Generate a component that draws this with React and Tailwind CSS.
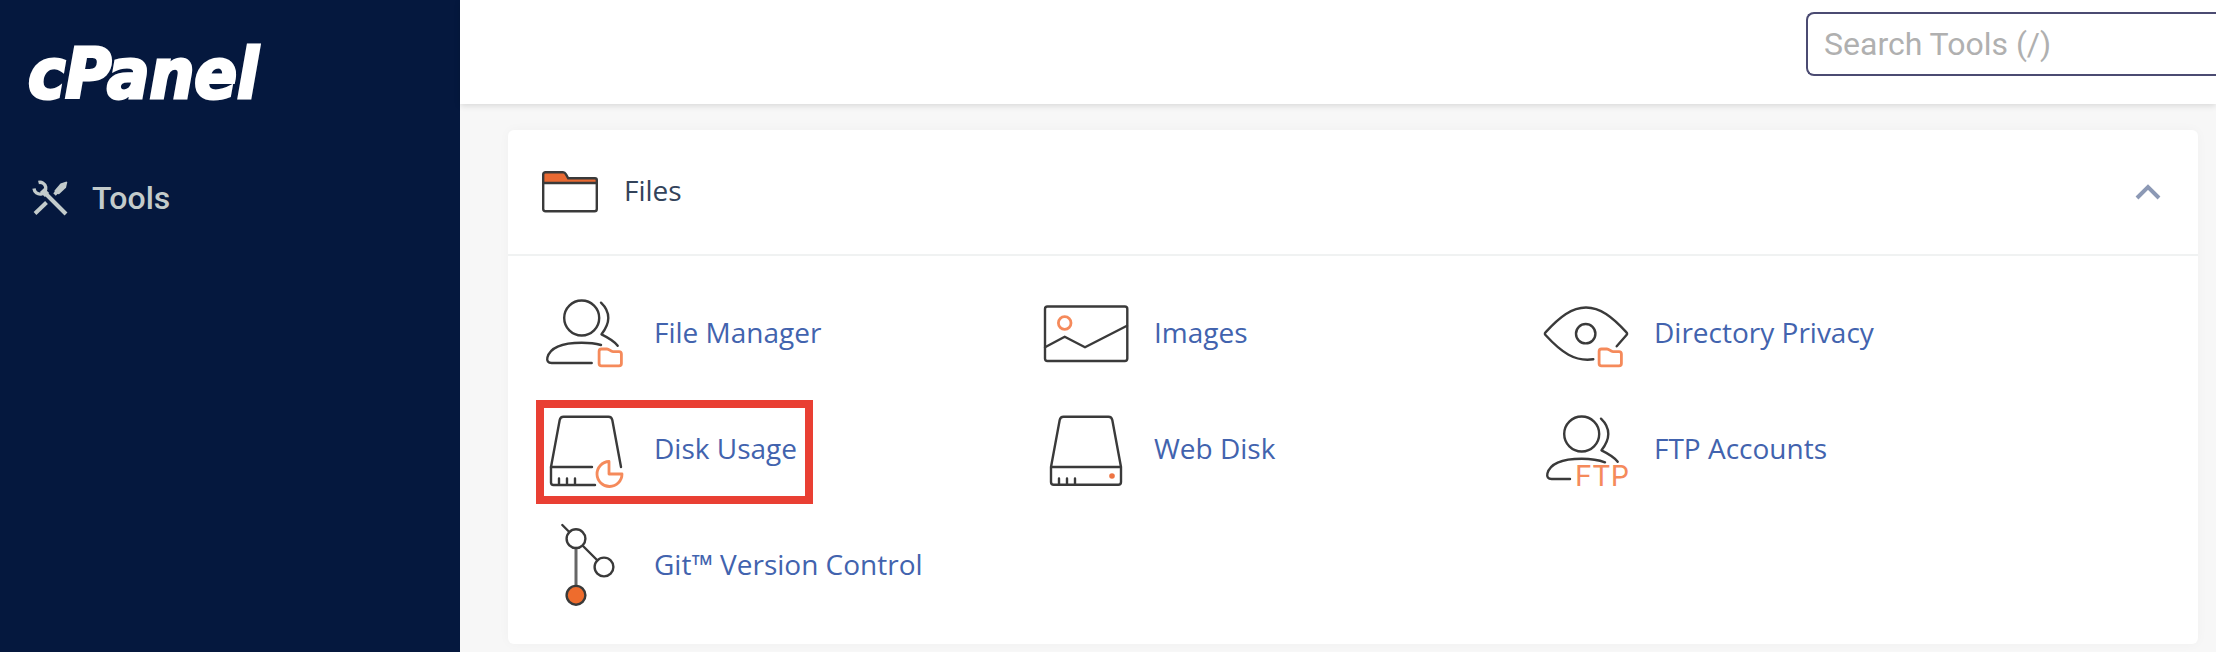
const INK = "#3a3a3a";
const ORANGE = "#f58a5b";

function Icon({ children }) {
  return (
    <svg
      viewBox="0 0 84 84"
      className="size-[84px] shrink-0 overflow-visible"
      fill="none"
      stroke={INK}
      strokeWidth="2.4"
      strokeLinecap="round"
      strokeLinejoin="round"
      aria-hidden="true"
    >
      {children}
    </svg>
  );
}

function FolderBadge() {
  return (
    <path
      stroke={ORANGE}
      strokeWidth="2.8"
      d="M57.5 57h5.5c2.4 0 3.2 2.600 6 2.600h6c1.400 0 2.400 1 2.400 2.400v9.500c0 1.400-1 2.400-2.400 2.400H57.500c-1.400 0-2.400-1-2.400-2.400V59.500c0-1.400 1-2.500 2.400-2.500z"
    />
  );
}

function UserShape() {
  return (
    <>
      <circle cx="37.7" cy="26" r="17.500" />
      <path d="M57 10.700C61.500 15 64.300 19.500 64.300 26c0 6.500-2.300 10.500-6.800 16.300C64 45.500 70 48.500 73.700 53.700" />
    </>
  );
}

function FileManagerIcon() {
  return (
    <Icon>
      <UserShape />
      <path d="M57 53c-6-1.700-12-2.300-19.300-2.300C18 50.700 6 56 3.400 65.500 2.600 69 4 71 7.700 71h40" />
      <FolderBadge />
    </Icon>
  );
}

function ImagesIcon() {
  return (
    <Icon>
      <rect x="1" y="14.500" width="82.300" height="54.500" rx="2.500" />
      <path d="M1 55.300l19.700-10.600L41 55.300l42-21.600" />
      <circle cx="20.700" cy="31" r="6.300" stroke={ORANGE} strokeWidth="2.800" />
    </Icon>
  );
}

function DirectoryPrivacyIcon() {
  return (
    <Icon>
      <path d="M49.300 67.300C31 70 17.500 60.500 1.500 43c-.8-.8-.8-1.800 0-2.600C16 24.500 28 15.500 42 15.500s26 9 40.500 24.900c.8.8.8 1.800 0 2.600l-9.800 11.300" />
      <circle cx="41.700" cy="41.700" r="9.700" />
      <FolderBadge />
    </Icon>
  );
}

function DiskUsageIcon() {
  return (
    <Icon>
      <path d="M77 59L68.300 12c-.5-2.300-1.600-3.300-3.800-3.300h-45c-2.200 0-3.300 1-3.800 3.300L7 59h41" />
      <path d="M7 59v15.500C7 76 8 77 9.500 77H51M15 70.500V77M23 70.500V77M31 70.500V77" />
      <path
        stroke={ORANGE}
        strokeWidth="2.800"
        d="M65 53.500V66h13a12.500 12.500 0 1 1-13-12.500z"
      />
    </Icon>
  );
}

function WebDiskIcon() {
  return (
    <Icon>
      <path d="M7 59l8.700-47c.5-2.300 1.600-3.300 3.800-3.300h45c2.200 0 3.300 1 3.800 3.300L77 59v15c0 1.800-1 2.800-2.800 2.800H9.800C8 76.800 7 75.800 7 74V59h70" />
      <path d="M15 70.500v6M23 70.500v6M31 70.500v6" />
      <circle cx="68" cy="68" r="2.800" fill="#ee7442" stroke="none" />
    </Icon>
  );
}

function FtpIcon() {
  return (
    <Icon>
      <UserShape />
      <path d="M61 54.300c-7-2.700-14-3.600-23.300-3.600C18 50.700 6 56 3.400 65.500 2.600 69 4 71 7.700 71H26" />
      <text
        x="31"
        y="78"
        fill={ORANGE}
        stroke="none"
        className="font-['Inter',sans-serif] text-[29px] font-normal"
      >
        FTP
      </text>
    </Icon>
  );
}

function GitIcon() {
  return (
    <Icon>
      <path d="M18.300 1l7 7M39 22l14.500 14.500" />
      <path d="M32 24v38" strokeWidth="3" stroke="#666666" />
      <circle cx="32" cy="14.700" r="9.400" />
      <circle cx="60" cy="43" r="9.400" />
      <circle cx="32" cy="71.300" r="9.400" fill="#ee6c2d" />
    </Icon>
  );
}

const tools = [
  { name: "File Manager", icon: FileManagerIcon },
  { name: "Images", icon: ImagesIcon },
  { name: "Directory Privacy", icon: DirectoryPrivacyIcon },
  { name: "Disk Usage", icon: DiskUsageIcon, highlighted: true },
  { name: "Web Disk", icon: WebDiskIcon },
  { name: "FTP Accounts", icon: FtpIcon },
  { name: "Git™ Version Control", icon: GitIcon },
];

function ToolLink({ name, icon: Glyph, highlighted }) {
  return (
    <li className="flex h-[116px] items-center">
      <a href="#" className="relative flex items-center gap-[26px] text-[28px] text-[#4263ae]">
        <Glyph />
        <span className="pb-1 whitespace-nowrap">{name}</span>
        {highlighted && (
          <span className="pointer-events-none absolute -top-2 -right-4 -bottom-3 -left-2 border-8 border-[#e93f33]" />
        )}
      </a>
    </li>
  );
}

function Sidebar() {
  return (
    <aside className="w-[460px] shrink-0 bg-[#05183e] px-7 pt-8">
      <a
        href="#"
        className="block font-['DejaVu_Sans_Condensed','DejaVu_Sans',sans-serif] text-[70px] leading-[84px] font-bold text-white italic [-webkit-text-stroke:3px_white]"
      >
        cPanel
      </a>
      <nav className="pt-[62px]">
        <a
          href="#"
          className="flex h-10 items-center gap-6 pl-1 font-['Roboto',sans-serif] text-[32px] font-medium text-[#c3cbcb]"
        >
          <svg viewBox="0 0 36 36" className="size-9" fill="none" stroke="currentColor" aria-hidden="true">
            <path d="M13 13L34 34" strokeWidth="4" />
            <path d="M3 33.500L14.500 22.500" strokeWidth="4" />
            <path d="M22.500 14.500L28 9" strokeWidth="3.500" />
            <path d="M23 13.500l-.5-3 6-7 6-2 .8.800-1.300 5.500-7 6.500z" fill="currentColor" stroke="none" />
            <path d="M6.500 2.500c3-.8 6.500 1 7.200 4.500.5 3.500-1.500 6.500-4.700 7-3.200.4-6.500-1.500-7-5.500" strokeWidth="3.400" />
            <path d="M10 10l5 5" strokeWidth="6" />
          </svg>
          Tools
        </a>
      </nav>
    </aside>
  );
}

export default function App() {
  return (
    <div className="flex min-h-screen overflow-hidden bg-[#f7f7f7] font-['Open_Sans',sans-serif]">
      <Sidebar />
      <div className="flex min-w-0 flex-1 flex-col">
        <header className="z-10 flex h-[104px] justify-end bg-white pt-3 shadow-[0_2px_6px_rgba(0,0,0,0.12)]">
          <input
            type="search"
            aria-label="Search Tools"
            placeholder="Search Tools (/)"
            className="h-16 w-[410px] rounded-l-lg border-2 border-r-0 border-[#4b4b72] bg-white pl-4 font-['Roboto',sans-serif] text-[32px] text-gray-800 placeholder:text-[#b0b0b0]"
          />
        </header>
        <main className="pt-[26px] pr-[18px] pb-2 pl-12">
          <section className="rounded-md bg-white shadow-[0_0_12px_rgba(0,0,0,0.03)]">
            <div className="flex h-[126px] items-center justify-between border-b-2 border-[#f0f2f2] pr-9 pl-[34px]">
              <h2 className="flex items-center gap-[26px] text-[28px] font-medium text-[#33435a]">
                <svg viewBox="0 0 56 44" className="h-11 w-14" aria-hidden="true">
                  <path d="M1.500 13V4.500C1.500 3 2.200 2.500 3.500 2.500H21c1.500 0 2.200.6 3 2l2.200 4H53c1.200 0 1.800.6 1.800 1.800V13z" fill="#e96a33" />
                  <path
                    d="M1.200 13V4.500C1.200 3 2 2.300 3.500 2.300H21c1.500 0 2.200.6 3 2l2.200 4H53c1.200 0 1.800.6 1.800 1.800V39c0 1.500-.8 2.300-2.300 2.300h-49C2 41.300 1.200 40.500 1.200 39V13h53.600"
                    fill="none"
                    stroke={INK}
                    strokeWidth="2.400"
                  />
                </svg>
                <span className="pb-1">Files</span>
              </h2>
              <button type="button" aria-label="Collapse Files" aria-expanded="true">
                <svg viewBox="0 0 28 28" className="size-7" fill="none" stroke="#8c99b5" strokeWidth="4" aria-hidden="true">
                  <path d="M3 20L14 9l11 11" />
                </svg>
              </button>
            </div>
            <ul className="grid grid-cols-[repeat(auto-fill,500px)] py-5 pl-9">
              {tools.map((tool) => (
                <ToolLink key={tool.name} {...tool} />
              ))}
            </ul>
          </section>
        </main>
      </div>
    </div>
  );
}
